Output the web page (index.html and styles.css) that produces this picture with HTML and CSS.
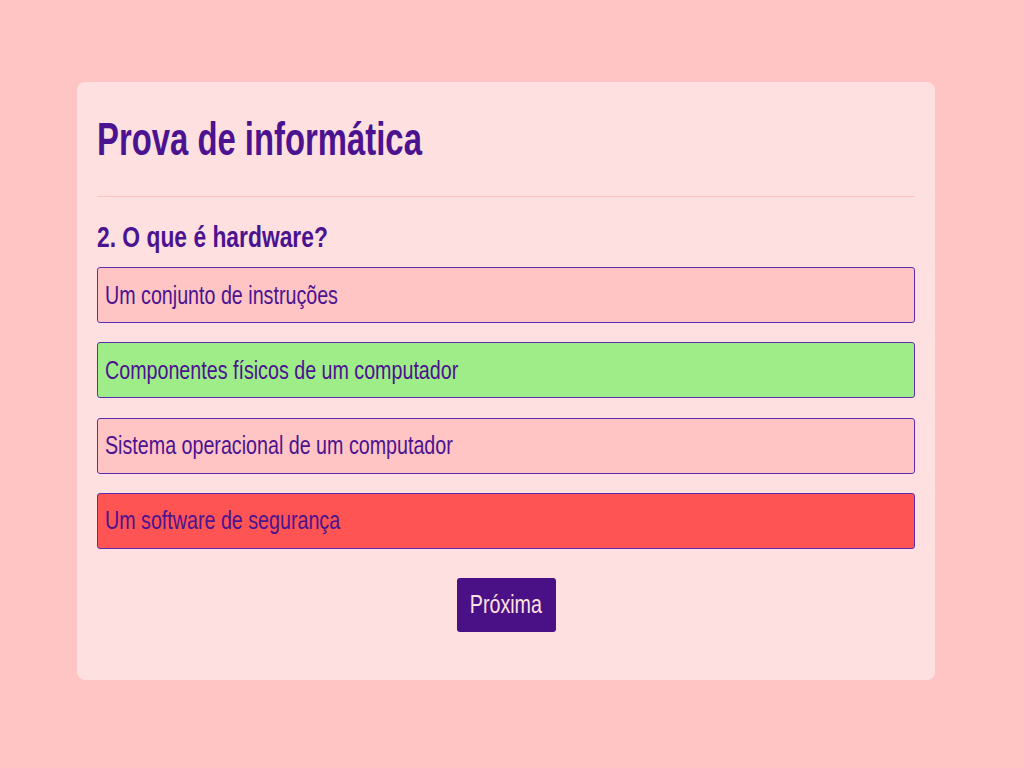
FILE: index.html
```html
<!DOCTYPE html>
<html lang="pt">
<head>
<meta charset="utf-8">
<title>Prova de informática</title>
<link rel="stylesheet" href="styles.css">
</head>
<body>
<main class="card">
  <h1 class="title"><span class="narrow narrow-title">Prova de informática</span></h1>
  <hr class="divider">
  <h2 class="question"><span class="narrow">2. O que é hardware?</span></h2>
  <div class="options">
    <button class="option"><span class="narrow">Um conjunto de instruções</span></button>
    <button class="option correct"><span class="narrow">Componentes físicos de um computador</span></button>
    <button class="option"><span class="narrow">Sistema operacional de um computador</span></button>
    <button class="option wrong"><span class="narrow">Um software de segurança</span></button>
  </div>
  <div class="actions">
    <button class="next"><span class="narrow narrow-center">Próxima</span></button>
  </div>
</main>
</body>
</html>
```
FILE: styles.css
```css
* { box-sizing: border-box; }
html, body { margin: 0; padding: 0; }
body {
  background: #ffc4c4;
  font-family: "Liberation Sans Narrow", "Liberation Sans", Arial, sans-serif;
  color: #4b1390;
  min-height: 768px;
  padding-top: 82px;
}
.narrow {
  display: inline-block;
  white-space: nowrap;
  transform: scaleX(0.787);
  transform-origin: left center;
}
.narrow-title { transform: scaleX(0.714); }
.narrow-center { transform-origin: center center; }
.card {
  width: 858px;
  margin-left: 77px;
  background: #ffe0e0;
  border-radius: 8px;
  padding: 14px 20px 48px;
}
.title {
  margin: 0;
  padding-top: 20px;
  font-size: 46px;
  line-height: 46px;
  font-weight: bold;
  color: #4b1390;
}
.divider {
  border: 0;
  border-top: 1px solid #ffc2c2;
  margin: 34px 0 0;
  height: 0;
}
.question {
  margin: 26px 0 15px;
  font-size: 29px;
  line-height: 29px;
  font-weight: bold;
  color: #4b1390;
}
.options {
  display: flex;
  flex-direction: column;
  gap: 19.33px;
}
.option {
  display: block;
  width: 100%;
  height: 56px;
  text-align: left;
  padding: 0 7px;
  font-family: inherit;
  font-size: 25px;
  line-height: 25px;
  color: #4b1390;
  background: #ffc4c4;
  border: 1px solid #5d2db0;
  border-radius: 3px;
}
.option.correct { background: #9fed88; }
.option.wrong { background: #ff5454; }
.actions {
  display: flex;
  justify-content: center;
  margin-top: 29px;
}
.next {
  width: 99px;
  height: 54px;
  padding: 0;
  font-family: inherit;
  font-size: 25px;
  line-height: 25px;
  color: #ffe0e0;
  background: #4a1186;
  border: 0;
  border-radius: 3px;
}
```
